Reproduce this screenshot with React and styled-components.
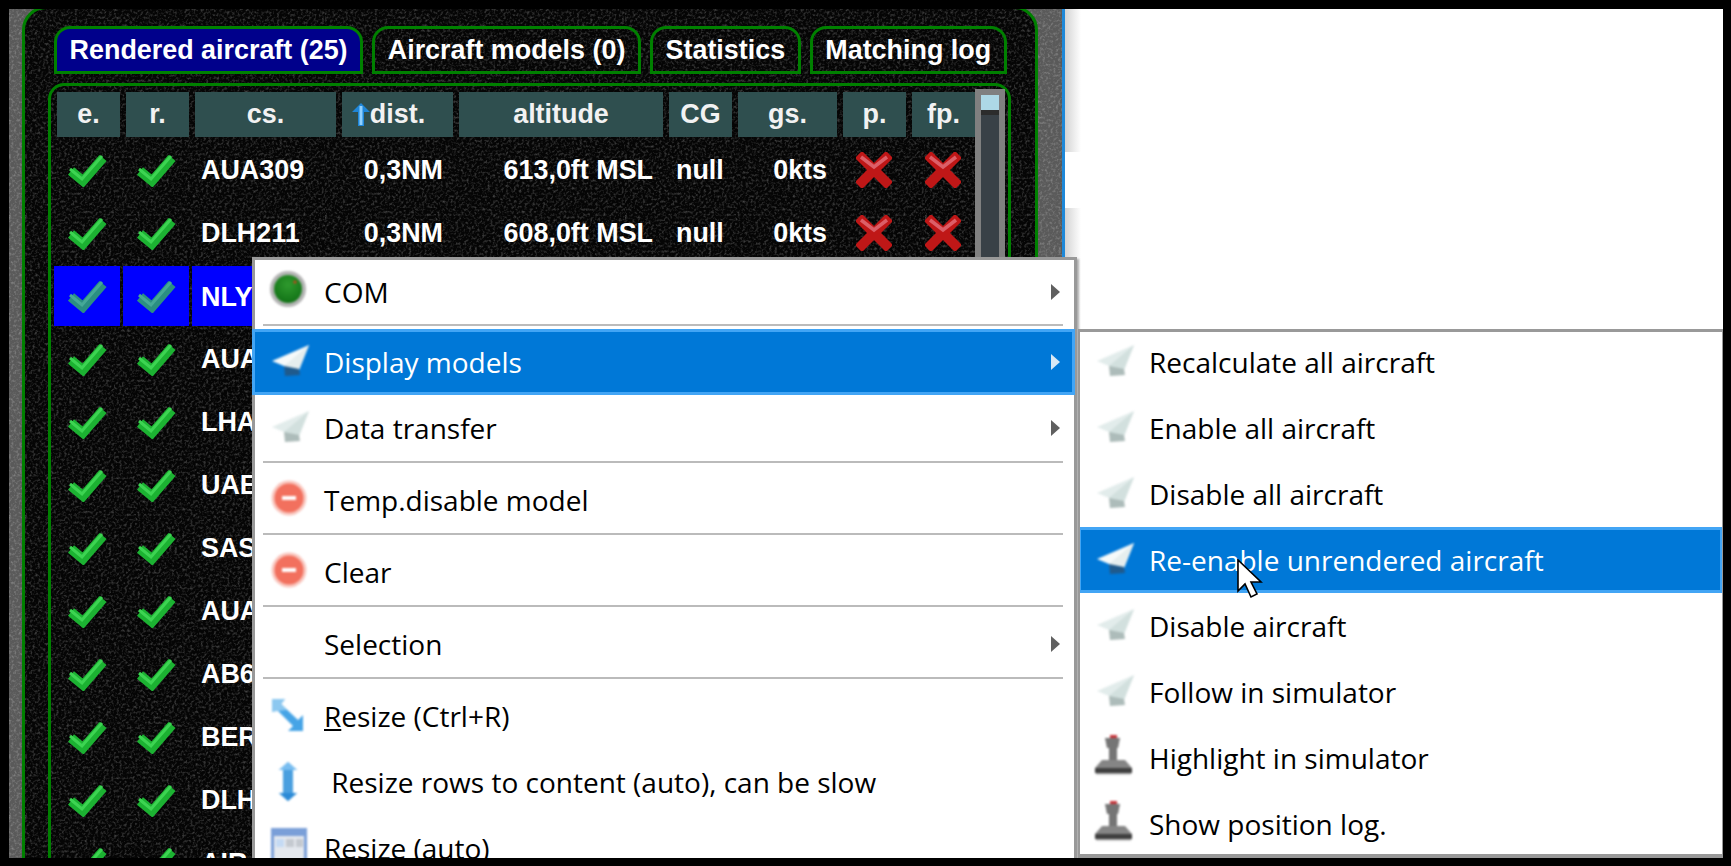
import React from "react";
import styled, { createGlobalStyle } from "styled-components";

const noise = `url("data:image/svg+xml,%3Csvg xmlns='http://www.w3.org/2000/svg' width='300' height='300'%3E%3Cfilter id='n'%3E%3CfeTurbulence type='fractalNoise' baseFrequency='.38' numOctaves='2' stitchTiles='stitch'/%3E%3CfeColorMatrix values='0 0 0 0 1 0 0 0 0 1 0 0 0 0 1 .6 0 0 0 -.28'/%3E%3C/filter%3E%3Crect width='100%25' height='100%25' filter='url(%23n)'/%3E%3C/svg%3E")`;

const GlobalStyle = createGlobalStyle`
  html, body {
    margin: 0;
    padding: 0;
    background: #000;
  }
  * {
    box-sizing: border-box;
  }
`;

const Page = styled.div`
  width: 1731px;
  height: 866px;
  padding: 9px 8px 8px 9px;
  background: #000;
  overflow: hidden;
`;

const Screen = styled.div`
  position: relative;
  display: flex;
  width: 1714px;
  height: 849px;
  background: #fff;
  overflow: hidden;
`;

const Window = styled.div`
  flex: none;
  width: 1056px;
  height: 100%;
  padding-left: 13px;
  background: ${noise} #5a5a5a;
  border-right: 3px solid #1e88d8;
`;

const WindowShadow = styled.div`
  flex: none;
  width: 16px;
  background:
    linear-gradient(#fff, #fff) 0 143px / 100% 56px no-repeat,
    linear-gradient(90deg, #d4d4d4, #fff);
`;

const Panel = styled.div`
  width: 1016px;
  height: 900px;
  margin-top: -3px;
  padding: 17px 0 0 29px;
  background: ${noise} #050505;
  border: 3px solid #008000;
  border-radius: 24px;
`;

const Tabs = styled.div`
  display: flex;
  gap: 9px;
`;

const Tab = styled.div`
  height: 48px;
  padding: 0 12.6px;
  background: ${({ $active }) => ($active ? "#00008b" : "transparent")};
  border: 3px solid #008000;
  border-radius: 16px 16px 0 0;
  color: #fff;
  font: bold 26.9px/43px "Liberation Sans", Arial, sans-serif;
  white-space: nowrap;
`;

const TableFrame = styled.div`
  display: flex;
  align-items: flex-start;
  width: 963px;
  height: 800px;
  margin: 9px 0 0 -6px;
  padding: 3px 3px 0 6px;
  border: 3px solid #008000;
  border-radius: 16px;
`;

const Grid = styled.div`
  flex: none;
  width: 918px;
  margin-top: 3px;
  color: #fff;
  font: bold 26.9px "Liberation Sans", Arial, sans-serif;
`;

const Row = styled.div`
  display: grid;
  grid-template-columns: 63px 63px 141px 111px 204px 63px 99px 63px 63px;
  column-gap: 6px;
  height: ${({ $head }) => ($head ? "46px" : "63px")};
`;

const HeadCell = styled.div`
  position: relative;
  height: 45px;
  background: #2f4f4f;
  color: #f2f2f2;
  line-height: 44px;
  text-align: center;
`;

const SortMark = styled.svg`
  position: absolute;
  left: 9px;
  top: 11px;
  width: 20px;
  height: 24px;
  filter: blur(0.6px);
`;

const Cell = styled.div`
  display: flex;
  align-items: center;
  justify-content: ${({ $align }) => ($align === "right" ? "flex-end" : $align === "center" ? "center" : "flex-start")};
  padding: ${({ $align }) => ($align === "right" ? "2px 10px 0 0" : $align === "center" ? "0" : "2px 0 0 6px")};
  white-space: nowrap;
`;

const SelectedCell = styled(Cell)`
  height: 60px;
  margin: 2px 0 0 -3px;
  padding-left: ${({ $align }) => ($align === "center" ? "3px" : "9px")};
  background: #0000ff;
`;

const NullCell = styled(Cell)`
  padding-left: 7px;
`;

const CheckMark = styled.svg`
  width: 40px;
  height: 34px;
  margin-right: 3px;
  filter: blur(0.6px);
`;

const CrossMark = styled.svg`
  width: 36px;
  height: 36px;
  margin-right: 2px;
  filter: blur(0.6px);
`;

const Scrollbar = styled.div`
  flex: none;
  width: 30px;
  height: 790px;
  padding: 6px 6px 0;
  background: #808080;
`;

const ScrollTrack = styled.div`
  height: 100%;
  background: linear-gradient(#2c2c2c, #2c2c2c) 0 15px / 100% 5px no-repeat, #394147;
`;

const ScrollHandle = styled.div`
  height: 15px;
  background: #add8e6;
`;

const Menu = styled.div`
  position: absolute;
  left: 243px;
  top: 248px;
  width: 825px;
  height: 620px;
  background: #fff;
  border: 3px solid #999;
  box-shadow: 2px 2px 2px rgba(0, 0, 0, 0.3);
  color: #000;
  font: 28px "Open Sans", "Noto Sans", sans-serif;
`;

const SubMenu = styled(Menu)`
  left: 1069px;
  top: 320px;
  width: 645px;
  height: 529px;
  border-width: 3px 1px 4px 2px;
  overflow: hidden;
  box-shadow: none;
`;

const Item = styled.div`
  display: flex;
  align-items: center;
  height: ${({ $short }) => ($short ? "64px" : "66px")};
  margin: 0 -1px 0 -3px;
  padding: 0 12px 0 15px;
  background: ${({ $active }) => ($active ? "#0078d7" : "transparent")};
  border: 3px solid ${({ $active }) => ($active ? "#42a5f5" : "transparent")};
  color: ${({ $active }) => ($active ? "#fff" : "#000")};
  white-space: pre;
`;

const SubItem = styled(Item)`
  margin-left: -2px;
  margin-right: -1px;
  padding-left: 14px;
  &:first-child {
    margin-top: -3px;
  }
`;

const IconBox = styled.svg`
  flex: none;
  width: 40px;
  height: 40px;
  margin-right: 14px;
  overflow: visible;
  filter: blur(0.9px);
`;

const SubIconBox = styled(IconBox)`
  margin-right: 14px;
`;

const Arrow = styled.span`
  margin-left: auto;
  border-style: solid;
  border-width: 8.5px 0 8.5px 9px;
  border-color: transparent transparent transparent ${({ $active }) => ($active ? "#d8e8f5" : "#606060")};
`;

const Separator = styled.div`
  height: 2px;
  margin: 0 11px ${({ $tight }) => ($tight ? "3px" : "4px")} 8px;
  background: #bbb;
`;

const Pointer = styled.svg`
  position: absolute;
  left: 1228px;
  top: 550px;
  width: 26px;
  height: 40px;
`;

const Check = ({ selected }) => (
  <CheckMark viewBox="0 0 40 34">
    <path d="M4 18 L16 28 L36 5" fill="none" stroke={selected ? "#2b8f82" : "#1cb232"} strokeWidth="9.5" />
    <path d="M3 16 L15 26 L35 3" fill="none" stroke={selected ? "#45a897" : "#3dd452"} strokeWidth="3" />
  </CheckMark>
);

const Cross = () => (
  <CrossMark viewBox="0 0 36 36">
    <path d="M6 6 L30 30 M30 6 L6 30" stroke="#bf1717" strokeWidth="10" strokeLinecap="square" />
    <path d="M5 5 L18 15 L31 5" fill="none" stroke="#dc5f68" strokeWidth="3.5" />
  </CrossMark>
);

const Plane = ({ as: Box = IconBox, active }) => (
  <Box viewBox="0 0 40 40">
    <path d="M39 3 L2 19 L14 24 L29 28 Z" fill={active ? "#f6fafa" : "#e2eceb"} />
    <path d="M39 3 L14 24 L16 30 L29 28 Z" fill={active ? "#e6eeee" : "#d2e0de"} />
    <path d="M14 24 L15 34 L30 33 L29 27 Z" fill={active ? "#1f5a8c" : "#adbcba"} />
  </Box>
);

const Led = () => (
  <IconBox viewBox="0 0 40 40">
    <defs>
      <radialGradient id="ledGreen" cx="0.5" cy="0.35" r="0.7">
        <stop offset="0" stopColor="#2f9a2e" />
        <stop offset="1" stopColor="#0f6f14" />
      </radialGradient>
    </defs>
    <circle cx="18" cy="17" r="18" fill="#b4b4b4" />
    <circle cx="18" cy="17" r="14" fill="url(#ledGreen)" />
    <circle cx="25" cy="10" r="1.6" fill="#d0401c" />
  </IconBox>
);

const Stop = () => (
  <IconBox viewBox="0 0 40 40">
    <circle cx="19" cy="18" r="17.5" fill="#f9c6be" />
    <circle cx="19" cy="18" r="14.5" fill="#f2705e" />
    <rect x="12" y="16" width="14" height="4" fill="#fff" />
  </IconBox>
);

const ResizeDiagonal = () => (
  <IconBox viewBox="0 0 40 40">
    <path d="M2 3 H15 L11 8 L28 24 L33 19 V35 H18 L23 30 L6 13 L2 16 Z" fill="#46a4e6" />
    <path d="M2 3 H15 L11 8 L17 14 L8 15 L2 16 Z" fill="#8cc8f0" />
  </IconBox>
);

const ResizeVertical = () => (
  <IconBox viewBox="0 0 40 40">
    <path d="M18 0 L27 8 H23 V31 H27 L18 39 L9 31 H13 V8 H9 Z" fill="#4a9fdf" />
    <path d="M18 0 L27 8 H9 Z" fill="#78bdf0" />
    <path d="M18 39 L27 31 H9 Z" fill="#2b8ad6" />
  </IconBox>
);

const TableIcon = () => (
  <IconBox viewBox="0 0 40 40">
    <rect x="1" y="0" width="36" height="38" fill="#7a9fd8" />
    <rect x="4" y="8" width="30" height="28" fill="#e4e8ee" />
    <rect x="6" y="11" width="8" height="8" fill="#c4daf4" />
    <rect x="16" y="11" width="8" height="8" fill="#c4c9d0" />
    <rect x="26" y="11" width="7" height="8" fill="#c4c9d0" />
  </IconBox>
);

const Joystick = ({ as: Box = IconBox }) => (
  <Box viewBox="0 0 40 40">
    <rect x="15" y="-3" width="7" height="6" fill="#c8343a" />
    <path d="M10 0 H25 L23 10 H22 V22 H14 V10 H12 Z" fill="#757575" />
    <path d="M7 22 H30 L37 30 H0 Z" fill="#858585" />
    <rect x="0" y="30" width="37" height="5" fill="#3f3f3f" />
    <rect x="1" y="35" width="35" height="1.5" fill="#b0b0b0" />
  </Box>
);

const rows = [
  { cs: "AUA309", dist: "0,3NM", altitude: "613,0ft MSL" },
  { cs: "DLH211", dist: "0,3NM", altitude: "608,0ft MSL" },
  { cs: "NLY", selected: true },
  { cs: "AUA" },
  { cs: "LHA" },
  { cs: "UAE" },
  { cs: "SAS" },
  { cs: "AUA" },
  { cs: "AB6" },
  { cs: "BER" },
  { cs: "DLH" },
  { cs: "AIR" },
];

const subItems = [
  { label: "Recalculate all aircraft", icon: "plane" },
  { label: "Enable all aircraft", icon: "plane" },
  { label: "Disable all aircraft", icon: "plane" },
  { label: "Re-enable unrendered aircraft", icon: "plane", active: true },
  { label: "Disable aircraft", icon: "plane" },
  { label: "Follow in simulator", icon: "plane" },
  { label: "Highlight in simulator", icon: "joystick" },
  { label: "Show position log.", icon: "joystick" },
];

function AircraftRow({ row }) {
  const StateCell = row.selected ? SelectedCell : Cell;
  return (
    <Row>
      <StateCell $align="center"><Check selected={row.selected} /></StateCell>
      <StateCell $align="center"><Check selected={row.selected} /></StateCell>
      <StateCell>{row.cs}</StateCell>
      {row.dist && (
        <>
          <Cell $align="right">{row.dist}</Cell>
          <Cell $align="right">{row.altitude}</Cell>
          <NullCell>null</NullCell>
          <Cell $align="right">0kts</Cell>
          <Cell $align="center"><Cross /></Cell>
          <Cell $align="center"><Cross /></Cell>
        </>
      )}
    </Row>
  );
}

export default function App() {
  return (
    <Page>
      <GlobalStyle />
      <Screen>
        <Window>
          <Panel>
            <Tabs>
              <Tab $active>Rendered aircraft (25)</Tab>
              <Tab>Aircraft models (0)</Tab>
              <Tab>Statistics</Tab>
              <Tab>Matching log</Tab>
            </Tabs>
            <TableFrame>
              <Grid>
                <Row $head>
                  <HeadCell>e.</HeadCell>
                  <HeadCell>r.</HeadCell>
                  <HeadCell>cs.</HeadCell>
                  <HeadCell>
                    <SortMark viewBox="0 0 20 24">
                      <path d="M10 0 L19 9 H13 V23 H7 V9 H1 Z" fill="#1f86d8" />
                      <path d="M10 3 V22" stroke="#8fd0ff" strokeWidth="3" />
                    </SortMark>
                    dist.
                  </HeadCell>
                  <HeadCell>altitude</HeadCell>
                  <HeadCell>CG</HeadCell>
                  <HeadCell>gs.</HeadCell>
                  <HeadCell>p.</HeadCell>
                  <HeadCell>fp.</HeadCell>
                </Row>
                {rows.map((row, i) => (
                  <AircraftRow key={i} row={row} />
                ))}
              </Grid>
              <Scrollbar>
                <ScrollTrack>
                  <ScrollHandle />
                </ScrollTrack>
              </Scrollbar>
            </TableFrame>
          </Panel>
        </Window>
        <WindowShadow />

        <Menu>
          <Item $short><Led />COM<Arrow /></Item>
          <Separator $tight />
          <Item $active><Plane active />Display models<Arrow $active /></Item>
          <Item><Plane />Data transfer<Arrow /></Item>
          <Separator />
          <Item><Stop />Temp.disable model</Item>
          <Separator />
          <Item><Stop />Clear</Item>
          <Separator />
          <Item><IconBox viewBox="0 0 40 40" />Selection<Arrow /></Item>
          <Separator />
          <Item><ResizeDiagonal /><span><u>R</u>esize (Ctrl+R)</span></Item>
          <Item><ResizeVertical /> Resize rows to content (auto), can be slow</Item>
          <Item><TableIcon />Resize (auto)</Item>
        </Menu>

        <SubMenu>
          {subItems.map((item) => (
            <SubItem key={item.label} $active={item.active}>
              {item.icon === "plane" ? <Plane as={SubIconBox} active={item.active} /> : <Joystick as={SubIconBox} />}
              {item.label}
            </SubItem>
          ))}
        </SubMenu>

        <Pointer viewBox="0 0 26 40">
          <path d="M1 1 V32 L8 25 L14 38 L20 35 L14 23 L24 23 Z" fill="#fff" stroke="#000" strokeWidth="1.6" />
        </Pointer>
      </Screen>
    </Page>
  );
}
